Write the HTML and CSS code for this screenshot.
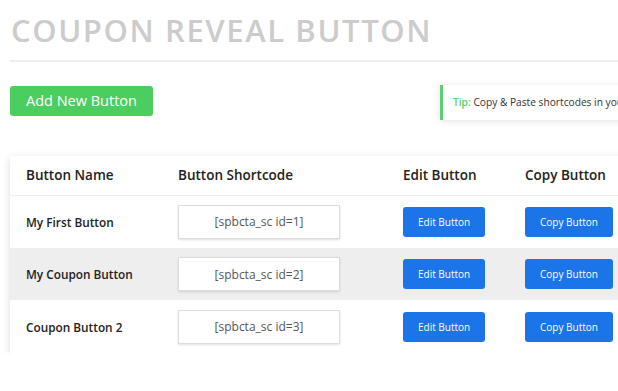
FILE: index.html
```html
<!DOCTYPE html>
<html>
    <head>
        <meta charset="UTF-8">
        <title>Coupon Reveal Button</title>
        <link rel="stylesheet" href="styles.css">
    </head>
    <body>
        <div class="wrap">
            <h1 class="title">Coupon Reveal Button</h1>

            <div class="bar">
                <a class="add-btn" href="#">Add New Button</a>
                <div class="tip"><b>Tip:</b> Copy &amp; Paste shortcodes in your posts or pages</div>
            </div>

            <div class="card">
                <table class="list">
                    <thead>
                        <tr>
                            <th class="c-name">Button Name</th>
                            <th class="c-code">Button Shortcode</th>
                            <th class="c-edit">Edit Button</th>
                            <th class="c-copy">Copy Button</th>
                        </tr>
                    </thead>
                    <tbody>
                        <tr>
                            <td>My First Button</td>
                            <td><input class="code" type="text" value="[spbcta_sc id=1]" readonly></td>
                            <td><a class="btn" href="#">Edit Button</a></td>
                            <td><a class="btn" href="#">Copy Button</a></td>
                        </tr>
                        <tr class="alt">
                            <td>My Coupon Button</td>
                            <td><input class="code" type="text" value="[spbcta_sc id=2]" readonly></td>
                            <td><a class="btn" href="#">Edit Button</a></td>
                            <td><a class="btn" href="#">Copy Button</a></td>
                        </tr>
                        <tr>
                            <td>Coupon Button 2</td>
                            <td><input class="code" type="text" value="[spbcta_sc id=3]" readonly></td>
                            <td><a class="btn" href="#">Edit Button</a></td>
                            <td><a class="btn" href="#">Copy Button</a></td>
                        </tr>
                    </tbody>
                </table>
            </div>
        </div>
    </body>
</html>
```

FILE: styles.css
```css
*{ margin:0; padding:0; box-sizing:border-box;}
html,body{ overflow:hidden;}
body{
    background:#fff;
    font-family:"Open Sans","Noto Sans",sans-serif;
    color:#222;
}
.wrap{
    width:760px;
    padding:0 10px;
}
.title{
    padding:14px 0 14px 1px;
    border-bottom:2px solid #eee;
    font-size:31px;
    font-weight:600;
    letter-spacing:1.6px;
    line-height:32px;
    text-transform:uppercase;
    white-space:nowrap;
    color:#ccc;
}
.bar{
    display:flex;
    align-items:flex-start;
    margin-top:23px;
}
.add-btn{
    display:block;
    margin-top:1px;
    width:143px;
    height:30px;
    line-height:30px;
    text-align:center;
    background:#4ccd5f;
    border-radius:3px;
    color:#fff;
    font-size:14.5px;
    text-decoration:none;
}
.tip{
    margin-left:287px;
    height:35px;
    padding:0 0 0 10px;
    line-height:35px;
    border-left:3px solid #5bcf71;
    box-shadow:0 1px 6px rgba(0,0,0,.12);
    font-size:10.2px;
    color:#333;
    white-space:nowrap;
}
.tip b{
    color:#5bcf71;
    font-weight:600;
}
.card{
    margin-top:36px;
    background:#fff;
    box-shadow:0 2px 8px rgba(0,0,0,.14);
}
.list{
    width:100%;
    border-collapse:collapse;
}
.list th{
    height:39px;
    padding:0 16px;
    text-align:left;
    font-size:13.5px;
    font-weight:600;
    border-bottom:1px solid #eee;
}
.c-name{ width:152px;}
.c-code{ width:225px;}
.c-edit{ width:122px;}
.list td{
    height:53px;
    padding:0 16px;
    font-size:11.8px;
    font-weight:600;
}
.list tr.alt td{
    background:#eee;
    height:52px;
}
.code{
    display:block;
    width:162px;
    height:34px;
    border:1px solid #ddd;
    box-shadow:0 1px 2px rgba(0,0,0,.12);
    background:#fff;
    text-align:center;
    font-family:inherit;
    font-size:12px;
    color:#555;
    outline:none;
}
.btn{
    display:inline-block;
    height:30px;
    line-height:30px;
    padding:0 15px;
    background:#1b74e8;
    border-radius:3px;
    color:#fff;
    font-size:10px;
    font-weight:400;
    text-decoration:none;
}
```
